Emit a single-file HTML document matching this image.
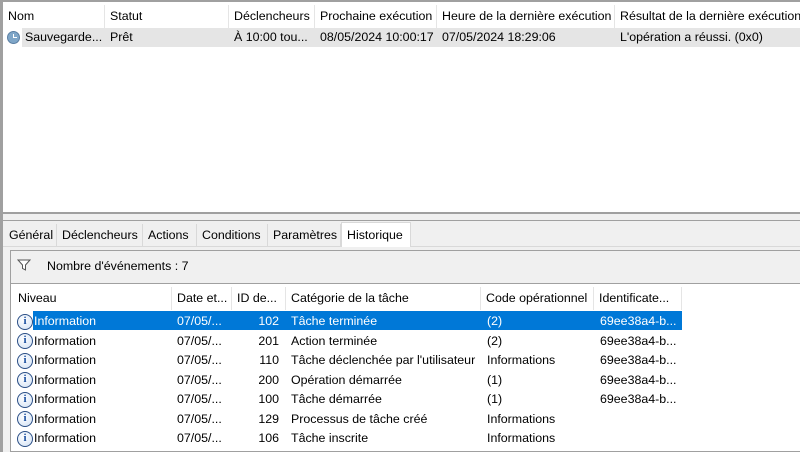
<!DOCTYPE html>
<html><head><meta charset="utf-8"><style>
*{margin:0;padding:0;box-sizing:border-box}
body{width:800px;height:452px;overflow:hidden;background:#f0f0f0;font-family:"Liberation Sans",sans-serif;font-size:12.4px;color:#000;position:relative}
.a{position:absolute;white-space:nowrap}
.top{left:0;top:0;width:800px;height:214px;background:#fff;border:3px solid #a0a0a0;border-right:none;border-bottom:2px solid #a0a0a0;border-top:2px solid #a0a0a0}
.hd{top:5px;height:23px;line-height:23px;border-right:1px solid #e5e5e5;padding-left:5px;background:#fff}
.c{top:28px;height:19px;line-height:19px;padding-left:5px}
.tab{top:224px;height:22px;line-height:23px;padding-left:5px;border-right:1px solid #d9d9d9;background:#f0f0f0}
.h2{top:287px;height:23px;line-height:23px;border-right:1px solid #e5e5e5;padding-left:5px;background:#fff}
.ic{width:16px;height:16px;border-radius:50%;border:1.5px solid #2b4f86;background:radial-gradient(circle at 40% 35%,#fff,#d0e0f4);color:#1a4fa0;font:bold 11px "Liberation Serif",serif;text-align:center;line-height:13px}
</style></head><body>
<div class="a top"></div>
<div class="a hd" style="left:3px;width:102px">Nom</div>
<div class="a hd" style="left:105px;width:124px">Statut</div>
<div class="a hd" style="left:229px;width:86px">Déclencheurs</div>
<div class="a hd" style="left:315px;width:122px">Prochaine exécution</div>
<div class="a hd" style="left:437px;width:178px">Heure de la dernière exécution</div>
<div class="a hd" style="left:615px;width:185px;border:none">Résultat de la dernière exécution</div>
<div class="a" style="left:22px;top:28px;width:778px;height:19px;background:#e5e5e5"></div>
<div class="a" style="left:7px;top:31px;width:13px;height:13px;border-radius:50%;background:#7fa6c8;border:1px solid #5b7fa3"><div style="position:absolute;left:5px;top:2px;width:1px;height:4px;background:#fff"></div><div style="position:absolute;left:5px;top:5px;width:4px;height:1px;background:#fff"></div></div>
<div class="a c" style="left:20px">Sauvegarde...</div>
<div class="a c" style="left:105px">Prêt</div>
<div class="a c" style="left:229px">À 10:00 tou...</div>
<div class="a c" style="left:315px">08/05/2024 10:00:17</div>
<div class="a c" style="left:437px">07/05/2024 18:29:06</div>
<div class="a c" style="left:615px">L'opération a réussi. (0x0)</div>

<div class="a" style="left:0;top:214px;width:3px;height:238px;background:#a0a0a0"></div>
<div class="a" style="left:3px;top:220px;width:797px;height:1px;background:#a0a0a0"></div>
<div class="a" style="left:3px;top:246px;width:797px;height:1px;background:#d9d9d9"></div>
<div class="a tab" style="left:4px;width:53px">Général</div>
<div class="a tab" style="left:57px;width:86px">Déclencheurs</div>
<div class="a tab" style="left:143px;width:54px">Actions</div>
<div class="a tab" style="left:197px;width:71px">Conditions</div>
<div class="a tab" style="left:268px;width:73px">Paramètres</div>
<div class="a tab" style="left:341px;top:222px;height:25px;line-height:24px;width:70px;background:#fff;border:1px solid #d9d9d9;border-bottom:none">Historique</div>

<div class="a" style="left:10px;top:250px;width:790px;height:202px;border:1px solid #a0a0a0;border-right:none;background:#fff"></div>
<div class="a" style="left:11px;top:251px;width:789px;height:33px;background:#f0f0f0;border-bottom:1px solid #a0a0a0"></div>
<svg class="a" style="left:17px;top:259px" width="14" height="12" viewBox="0 0 14 12"><path d="M1 1H13L8.5 6V11L5.5 9.5V6Z" fill="#fff" stroke="#555" stroke-width="1"/></svg>
<div class="a" style="left:47px;top:259px">Nombre d'événements : 7</div>

<div class="a h2" style="left:13px;width:159px">Niveau</div>
<div class="a h2" style="left:172px;width:60px">Date et...</div>
<div class="a h2" style="left:232px;width:54px">ID de...</div>
<div class="a h2" style="left:286px;width:195px">Catégorie de la tâche</div>
<div class="a h2" style="left:481px;width:113px">Code opérationnel</div>
<div class="a h2" style="left:594px;width:88px">Identificate...</div>
<div class="a" style="left:33px;top:311px;width:649px;height:19px;background:#0078d7"></div>

<div id="rows"></div>
<script>
var d=[["102","Tâche terminée","(2)","69ee38a4-b..."],["201","Action terminée","(2)","69ee38a4-b..."],["110","Tâche déclenchée par l'utilisateur","Informations","69ee38a4-b..."],["200","Opération démarrée","(1)","69ee38a4-b..."],["100","Tâche démarrée","(1)","69ee38a4-b..."],["129","Processus de tâche créé","Informations",""],["106","Tâche inscrite","Informations",""]];
var h="";
d.forEach(function(r,i){var y=312+i*19.5;var col=i==0?"#fff":"#000";
var s='style="top:'+y+'px;height:19px;line-height:19px;color:'+col+';';
h+='<div class="a ic" style="left:17px;top:'+(y+1.5)+'px">i</div>';
h+='<div class="a" '+s+'left:34px">Information</div>';
h+='<div class="a" '+s+'left:177px">07/05/...</div>';
h+='<div class="a" '+s+'left:232px;width:47px;text-align:right">'+r[0]+'</div>';
h+='<div class="a" '+s+'left:291px">'+r[1]+'</div>';
h+='<div class="a" '+s+'left:487px">'+r[2]+'</div>';
h+='<div class="a" '+s+'left:600px">'+r[3]+'</div>';});
document.getElementById("rows").innerHTML=h;
</script>
</body></html>
